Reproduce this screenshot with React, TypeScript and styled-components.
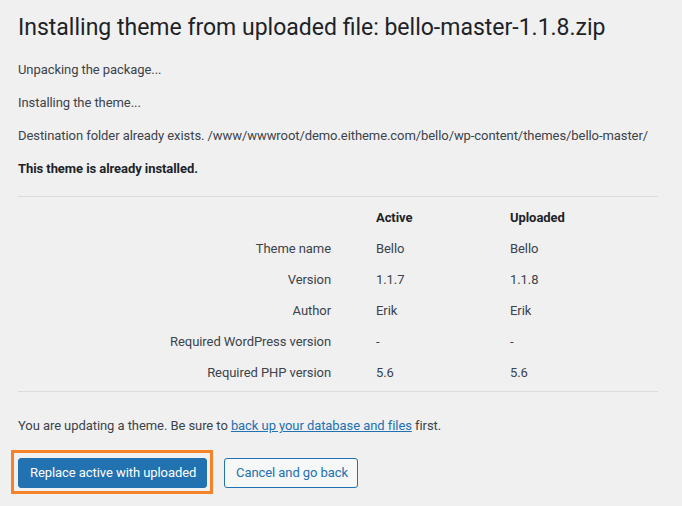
import React from 'react';
import styled, { createGlobalStyle } from 'styled-components';

const GlobalStyle = createGlobalStyle`
  body {
    margin: 0;
    background: #f0f0f1;
    color: #3c434a;
    font-family: Roboto, "Liberation Sans", sans-serif;
    font-size: 13px;
    letter-spacing: -0.07px;
  }
`;

const Wrap = styled.div`
  width: 640px;
  padding: 4px 0 0 18px;
`;

const Title = styled.h1`
  margin: 0;
  padding: 9px 0 4px;
  font-size: 23px;
  font-weight: 400;
  line-height: 30px;
  letter-spacing: 0;
  color: #1d2327;
`;

const Message = styled.p<{ $strong?: boolean }>`
  margin: 13px 0;
  line-height: 20px;
  font-weight: ${(p) => (p.$strong ? 700 : 400)};
  color: ${(p) => (p.$strong ? '#1d2327' : '#3c434a')};
`;

const Comparison = styled.div`
  margin: 17px 0 24px;
  padding: 5px 0 3px;
  border-top: 1px solid #dcdcde;
  border-bottom: 1px solid #dcdcde;
  display: grid;
  grid-template-columns: 313px 89px 1fr;
  grid-auto-rows: 31px;
  column-gap: 45px;
  align-items: center;
`;

const Cell = styled.div<{ $label?: boolean; $head?: boolean }>`
  text-align: ${(p) => (p.$label ? 'right' : 'left')};
  font-weight: ${(p) => (p.$head ? 700 : 400)};
  color: ${(p) => (p.$head ? '#1d2327' : '#3c434a')};
  line-height: 20px;
`;

const Notice = styled.p`
  margin: 0 0 14px;
  line-height: 20px;
  a {
    color: #2271b1;
    text-decoration: underline;
  }
`;

const Actions = styled.div`
  display: flex;
  align-items: flex-start;
  gap: 11px;
  margin-left: -7px;
`;

const Highlight = styled.div`
  border: 3px solid #f5822a;
  padding: 5px 3px 3px 4px;
  display: flex;
`;

const Button = styled.button<{ $primary?: boolean }>`
  height: 30px;
  padding: 0 11px;
  border-radius: 3px;
  border: 1px solid #2271b1;
  background: ${(p) => (p.$primary ? '#2271b1' : '#f6f7f7')};
  color: ${(p) => (p.$primary ? '#ffffff' : '#2271b1')};
  font-family: inherit;
  font-size: 13px;
  letter-spacing: -0.07px;
  line-height: 28px;
  cursor: pointer;
  white-space: nowrap;
`;

const PrimaryButton = styled(Button)`
  width: 189px;
`;

const CancelButton = styled(Button)`
  margin-top: 8px;
  width: 134px;
`;

const rows: [string, string, string][] = [
  ['Theme name', 'Bello', 'Bello'],
  ['Version', '1.1.7', '1.1.8'],
  ['Author', 'Erik', 'Erik'],
  ['Required WordPress version', '-', '-'],
  ['Required PHP version', '5.6', '5.6'],
];

export default function App() {
  return (
    <>
      <GlobalStyle />
      <Wrap>
        <Title>Installing theme from uploaded file: bello-master-1.1.8.zip</Title>
        <Message>Unpacking the package...</Message>
        <Message>Installing the theme...</Message>
        <Message>
          Destination folder already exists. /www/wwwroot/demo.eitheme.com/bello/wp-content/themes/bello-master/
        </Message>
        <Message $strong>This theme is already installed.</Message>

        <Comparison>
          <Cell $label />
          <Cell $head>Active</Cell>
          <Cell $head>Uploaded</Cell>
          {rows.map(([label, active, uploaded]) => (
            <React.Fragment key={label}>
              <Cell $label>{label}</Cell>
              <Cell>{active}</Cell>
              <Cell>{uploaded}</Cell>
            </React.Fragment>
          ))}
        </Comparison>

        <Notice>
          You are updating a theme. Be sure to <a href="#">back up your database and files</a> first.
        </Notice>

        <Actions>
          <Highlight>
            <PrimaryButton $primary>Replace active with uploaded</PrimaryButton>
          </Highlight>
          <CancelButton>Cancel and go back</CancelButton>
        </Actions>
      </Wrap>
    </>
  );
}
